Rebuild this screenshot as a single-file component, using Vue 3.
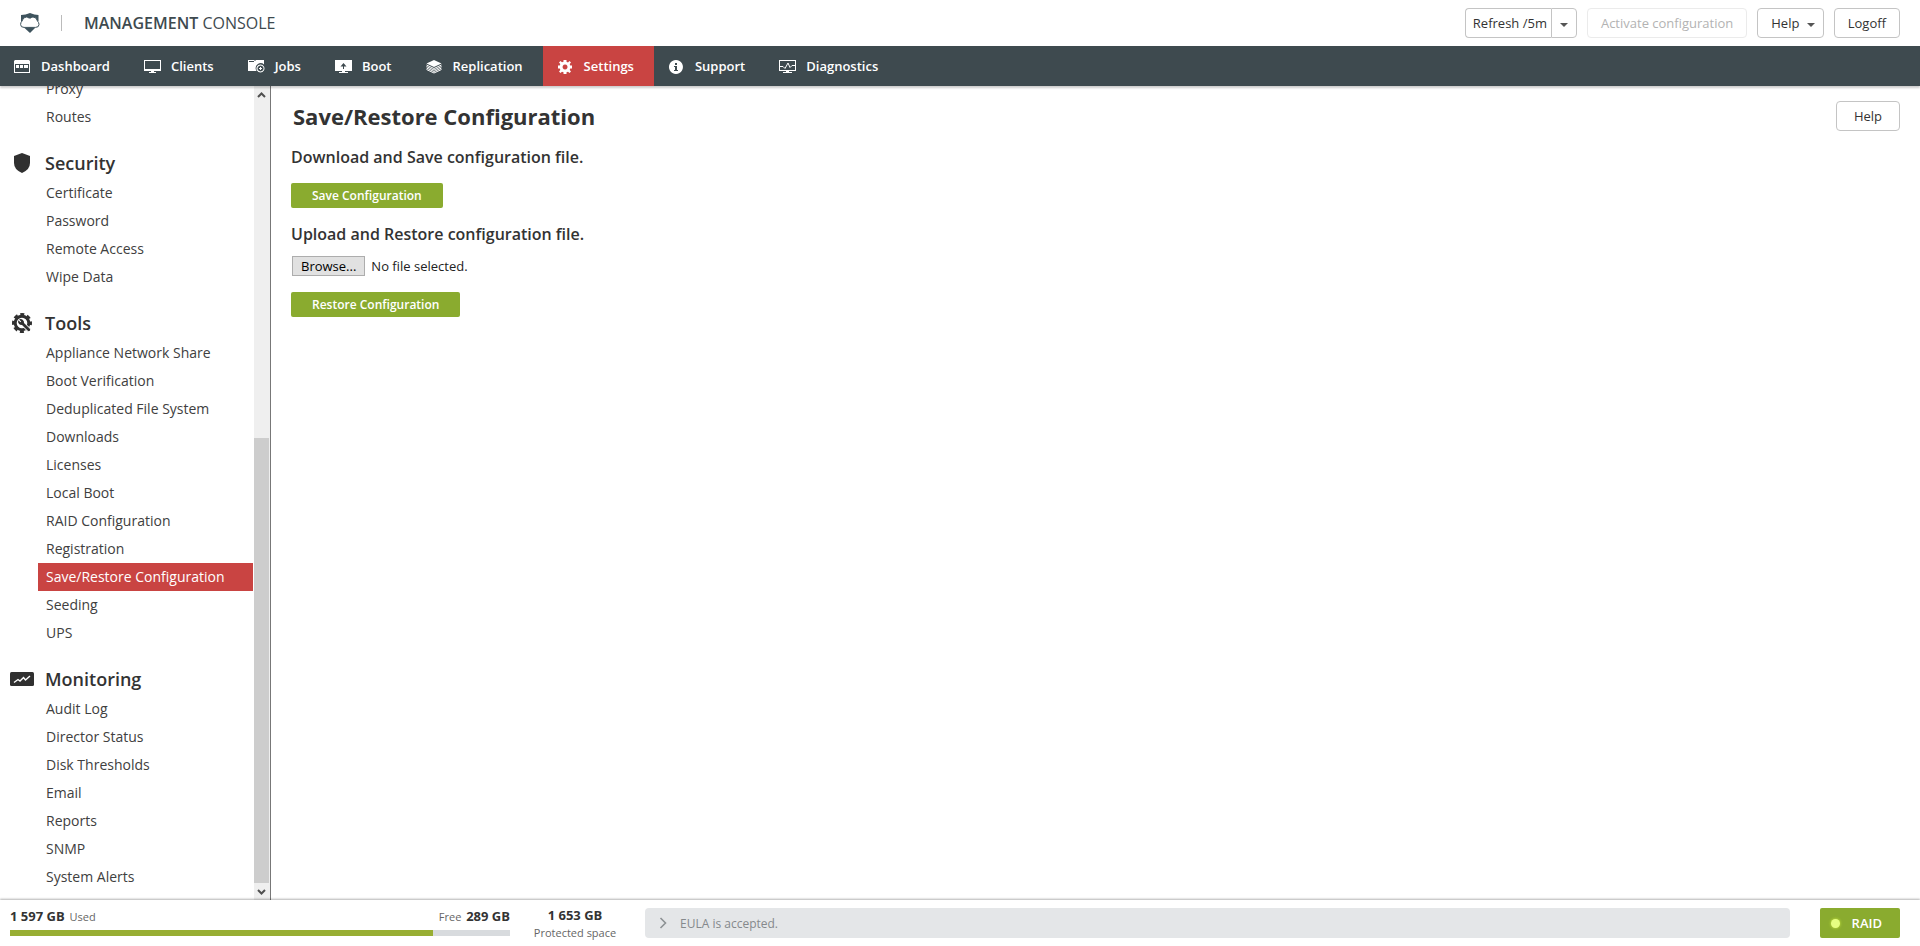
<template>
  <div class="console">
    <header class="top-bar">
      <svg class="logo" viewBox="0 0 20 20" width="20" height="20" aria-hidden="true">
        <path d="M1 2 Q5.500 2 10 0 Q14.500 2 18.500 2 V8 H1 Z" fill="#3e535d" />
        <path d="M2 8 Q3 4 6.500 4 Q8 4 8.500 5 H11 Q11.500 4 13 4 Q16.500 4 17.500 8 Q19 9.500 19 11.500 Q19 14.400 15.500 14.400 H4 Q.6 14.400 .6 11.500 Q.6 9.500 2 8 Z" fill="#fff" stroke="#3e535d" stroke-width="1" />
        <path d="M4.500 15 Q10 14 15 15 L10 20 Z" fill="#3e535d" />
      </svg>
      <span class="divider"></span>
      <h1 class="brand"><strong>MANAGEMENT</strong> CONSOLE</h1>

      <div class="top-actions">
        <div class="split">
          <button class="btn split-main">Refresh /5m</button>
          <button class="btn split-toggle" aria-label="Refresh interval"><span class="caret"></span></button>
        </div>
        <button class="btn" disabled>Activate configuration</button>
        <button class="btn btn-menu">Help <span class="caret"></span></button>
        <button class="btn">Logoff</button>
      </div>
    </header>

    <nav class="main-nav">
      <a v-for="item in navItems" :key="item.label" href="#" :class="['nav-item', { active: item.label === activeTab }]" @click.prevent="activeTab = item.label">
        <svg class="nav-icon" viewBox="0 -1 18 16" width="18" height="16" aria-hidden="true">
          <path :d="item.icon" fill="currentColor" fill-rule="evenodd" />
          <path v-if="item.lines" :d="item.lines" fill="none" :stroke="item.stroke || 'currentColor'" stroke-width="1" />
        </svg>
        <span>{{ item.label }}</span>
      </a>
    </nav>

    <div class="body">
      <aside class="sidebar">
        <div class="menu">
          <section v-for="group in groups" :key="group.title" class="group">
            <h2 v-if="group.title" class="group-title">
              <span class="group-icon">
                <svg v-if="group.icon === 'shield'" viewBox="0 0 16 20" width="16" height="20">
                  <path d="M8 0 L16 3 V10 Q16 16.500 8 20 Q0 16.500 0 10 V3 Z" fill="#303030" />
                </svg>
                <svg v-else-if="group.icon === 'tools'" viewBox="0 0 20 20" width="20" height="20">
                  <circle cx="10" cy="10" r="6.800" fill="none" stroke="#303030" stroke-width="3" />
                  <circle cx="10" cy="10" r="8.700" fill="none" stroke="#303030" stroke-width="2.600" stroke-dasharray="4 2.833" stroke-dashoffset="2" />
                  <path d="M11 11 L19 19" stroke="#fff" stroke-width="4.500" />
                  <path d="M10 10 L16.800 16.800" stroke="#303030" stroke-width="2.800" stroke-linecap="round" />
                  <path d="M7 6.500 L9.200 8.500 L8.500 9.300 L6.300 7.200 A3.400 3.400 0 0 0 10.800 11.600 L12 10 A3.400 3.400 0 0 0 7 6.500 Z" fill="#303030" />
                </svg>
                <svg v-else-if="group.icon === 'chart'" viewBox="0 0 24 14" width="24" height="14">
                  <rect width="24" height="14" rx="1.500" fill="#303030" />
                  <path d="M4 10.500 L8 7.500 L10 9 L13.500 5.500 L15.500 8 L20 4" fill="none" stroke="#fff" stroke-width="1.400" />
                </svg>
              </span>
              {{ group.title }}
            </h2>
            <ul class="links">
              <li v-for="link in group.links" :key="link">
                <a href="#" :class="{ selected: link === activePage }" @click.prevent="activePage = link">{{ link }}</a>
              </li>
            </ul>
          </section>
        </div>
        <div class="scrollbar" aria-hidden="true">
          <svg class="arrow" viewBox="0 0 15 17" width="15" height="17">
            <path d="M4 11 L7.500 7.500 L11 11" fill="none" stroke="#505050" stroke-width="2" />
          </svg>
          <div class="track">
            <div class="thumb"></div>
          </div>
          <svg class="arrow" viewBox="0 0 15 17" width="15" height="17">
            <path d="M4 7 L7.500 10.500 L11 7" fill="none" stroke="#505050" stroke-width="2" />
          </svg>
        </div>
      </aside>

      <main class="content">
        <div class="content-head">
          <h2 class="page-title">Save/Restore Configuration</h2>
          <button class="btn btn-help">Help</button>
        </div>

        <h3>Download and Save configuration file.</h3>
        <button class="btn-green">Save Configuration</button>

        <h3>Upload and Restore configuration file.</h3>
        <label class="file-field">
          <input type="file" @change="onFile" />
          <span class="browse">Browse...</span>
          <span>{{ fileName }}</span>
        </label>
        <button class="btn-green">Restore Configuration</button>
      </main>
    </div>

    <footer class="status-bar">
      <div class="storage">
        <div class="storage-text">
          <span><strong>1 597 GB</strong> Used</span>
          <span>Free <strong>289 GB</strong></span>
        </div>
        <div class="meter">
          <div class="meter-fill" :style="{ width: usedPercent + '%' }"></div>
        </div>
      </div>
      <div class="protected">
        <strong>1 653 GB</strong>
        <span>Protected space</span>
      </div>
      <div class="message">
        <svg viewBox="0 0 8 12" width="8" height="12" aria-hidden="true">
          <path d="M1.500 1 L6.500 6 L1.500 11" fill="none" stroke="#8d9294" stroke-width="1.600" />
        </svg>
        <span>EULA is accepted.</span>
      </div>
      <button class="raid"><span class="led"></span>RAID</button>
    </footer>
  </div>
</template>

<script setup>
import { ref, computed } from 'vue'

const activeTab = ref('Settings')
const activePage = ref('Save/Restore Configuration')
const fileName = ref('No file selected.')

const used = 1597
const free = 289
const usedPercent = computed(() => (used / (used + free)) * 100)

const onFile = (e) => {
  const file = e.target.files[0]
  fileName.value = file ? file.name : 'No file selected.'
}

const navItems = [
  {
    label: 'Dashboard',
    icon: 'M1 1 H15 L16 2 V14 H0 V2 Z M1 5 V13 H15 V5 Z M2 6 H5 V9 H2 Z M6 6 H9 V9 H6 Z M10 6 H14 V9 H10 Z'
  },
  {
    label: 'Clients',
    icon: 'M0 1 H17 V12 H10 V13 H12 V14 H5 V13 H7 V12 H0 Z M1 2 V10 H16 V2 Z'
  },
  {
    label: 'Jobs',
    icon: 'M0 1 H6 L7 2 L8 1 H16 V5.500 A5 5 0 0 0 8 11 L8.500 12 H0 Z M12.500 5.500 A4 4 0 1 1 12.400 5.500 Z M12.500 6.500 A3 3 0 1 0 12.600 6.500 Z M12 8 H13 V9 H14 V10 H13 V11 H12 V10 H11 V9 H12 Z',
    lines: 'M1 2.500 H6',
    stroke: '#3e4a4f'
  },
  {
    label: 'Boot',
    icon: 'M0 1 H17 V12 H10 V13 H13 V14 H4 V13 H7 V12 H0 Z M8.500 4 L5.500 7.500 H8 V10 H9 V7.500 H11.500 Z'
  },
  {
    label: 'Replication',
    icon: 'M8 1 L15.500 4.500 L8 8 L.5 4.500 Z',
    lines: 'M.5 6 L8 9.500 L15.500 6 M.5 7.500 L8 11 L15.500 7.500 M.5 9 L8 12.500 L15.500 9 M.5 10.500 L8 14 L15.500 10.500'
  },
  {
    label: 'Settings',
    icon: 'M6.500 1 H9.500 V2.800 L11 3.400 L12.500 2 L14 3.500 L12.700 5 L13.200 6.500 H15 V9.500 H13.200 L12.700 11 L14 12.500 L12.500 14 L11 12.700 L9.500 13.200 V15 H6.500 V13.200 L5 12.700 L3.500 14 L2 12.500 L3.300 11 L2.800 9.500 H1 V6.500 H2.800 L3.300 5 L2 3.500 L3.500 2 L5 3.300 L6.500 2.800 Z M8 5.500 A2.500 2.500 0 1 0 8.100 5.500 Z'
  },
  {
    label: 'Support',
    icon: 'M8 1 A7 7 0 1 1 7.900 1 Z M7 4 V6 H9 V4 Z M6 7 V8 H7 V11 H6 V12 H10 V11 H9 V7 Z'
  },
  {
    label: 'Diagnostics',
    icon: 'M0 1 H17 V12 H10 V13 H13 V14 H4 V13 H7 V12 H0 Z M1 2 V11 H16 V2 Z',
    lines: 'M1 7.500 H4 L6 9.500 L9 4 L11 8.500 L13 6.500 H16'
  }
]

const groups = [
  {
    links: ['Proxy', 'Routes']
  },
  {
    title: 'Security',
    icon: 'shield',
    links: ['Certificate', 'Password', 'Remote Access', 'Wipe Data']
  },
  {
    title: 'Tools',
    icon: 'tools',
    links: [
      'Appliance Network Share',
      'Boot Verification',
      'Deduplicated File System',
      'Downloads',
      'Licenses',
      'Local Boot',
      'RAID Configuration',
      'Registration',
      'Save/Restore Configuration',
      'Seeding',
      'UPS'
    ]
  },
  {
    title: 'Monitoring',
    icon: 'chart',
    links: ['Audit Log', 'Director Status', 'Disk Thresholds', 'Email', 'Reports', 'SNMP', 'System Alerts']
  }
]
</script>

<style>
body {
  margin: 0;
  background: #fff;
}
</style>

<style scoped>
.console {
  height: 100vh;
  display: flex;
  flex-direction: column;
  font-family: "Open Sans", "Noto Sans", sans-serif;
  font-size: 14px;
  color: #333;
}

h1,
h2,
h3,
ul {
  margin: 0;
  padding: 0;
}

button {
  font-family: inherit;
  cursor: pointer;
}

svg {
  display: block;
}

.top-bar {
  height: 46px;
  display: flex;
  align-items: center;
  padding: 0 20px;
  flex-shrink: 0;
}

.divider {
  width: 1px;
  height: 16px;
  margin: 0 22px 0 21px;
  background: #bbb;
}

.brand {
  font-size: 16px;
  font-weight: 400;
  color: #3e4a4f;
}

.brand strong {
  font-weight: 600;
}

.top-actions {
  margin-left: auto;
  display: flex;
  gap: 10px;
}

.btn {
  height: 30px;
  box-sizing: border-box;
  padding: 0 13px;
  border: 1px solid #c4c4c4;
  border-radius: 4px;
  background: #fff;
  color: #333;
  font-size: 13px;
}

.btn:disabled {
  border-color: #ebebeb;
  color: #b3b3b3;
  cursor: default;
}

.split {
  display: flex;
}

.split-main {
  padding: 0 4px 0 7px;
  border-right: none;
  border-radius: 4px 0 0 4px;
}

.split-toggle {
  padding: 0 8px;
  border-radius: 0 4px 4px 0;
}

.caret {
  display: inline-block;
  border: 4px solid transparent;
  border-top-color: #555;
  border-bottom: none;
  vertical-align: middle;
}

.btn-menu {
  padding: 0 8px 0 13px;
}

.btn-menu .caret {
  margin-left: 4px;
}

.main-nav {
  position: relative;
  z-index: 1;
  height: 40px;
  display: flex;
  flex-shrink: 0;
  background: #3e4a4f;
  box-shadow: 0 2px 2px rgba(0, 0, 0, 0.2);
}

.nav-item {
  display: flex;
  align-items: center;
  gap: 9px;
  padding: 0 20px 0 14px;
  color: #fff;
  font-size: 13px;
  font-weight: 600;
  text-decoration: none;
}

.nav-item.active {
  background: #c94442;
}

.body {
  flex: 1;
  min-height: 0;
  display: flex;
}

.sidebar {
  width: 270px;
  display: flex;
  flex-shrink: 0;
  border-right: 1px solid #777;
}

/* the menu rests at the end of its scroll range */
.menu {
  flex: 1;
  display: flex;
  flex-direction: column;
  justify-content: flex-end;
  overflow: hidden;
  padding: 0 1px 9px 0;
}

.group {
  flex-shrink: 0;
}

.group-title {
  display: flex;
  align-items: center;
  margin: 18px 0 2px;
  font-size: 18px;
  font-weight: 600;
  line-height: 28px;
}

.group-icon {
  width: 44px;
  display: flex;
  justify-content: center;
  margin-right: 1px;
}

.links {
  list-style: none;
  margin-left: 38px;
}

.links a {
  display: block;
  padding-left: 8px;
  line-height: 28px;
  color: #404040;
  text-decoration: none;
}

.links a.selected {
  background: #c94442;
  color: #fff;
}

.scrollbar {
  width: 16px;
  display: flex;
  flex-direction: column;
  background: #efefef;
}

.track {
  flex: 1;
  display: flex;
  flex-direction: column;
  justify-content: flex-end;
}

.thumb {
  width: 15px;
  height: 57%;
  background: #cdcdcd;
}

.content {
  flex: 1;
  display: flex;
  flex-direction: column;
  align-items: flex-start;
  padding: 15px 20px;
}

.content-head {
  align-self: stretch;
  display: flex;
  align-items: center;
  justify-content: space-between;
  margin-bottom: 14px;
}

.page-title {
  padding-left: 2px;
  font-size: 22px;
  font-weight: 700;
  line-height: 30px;
}

.btn-help {
  padding: 0 17px;
}

h3 {
  font-size: 16px;
  font-weight: 600;
  line-height: 24px;
  margin-bottom: 14px;
}

.btn-green {
  height: 25px;
  padding: 0 21px;
  border: none;
  border-radius: 2px;
  background: #8aab2f;
  color: #fff;
  font-size: 12px;
  font-weight: 600;
}

.btn-green + h3 {
  margin: 14px 0 10px;
}

.file-field {
  position: relative;
  display: flex;
  align-items: center;
  gap: 6px;
  margin: 0 0 16px 1px;
  font-size: 13px;
  line-height: 18px;
  color: #222;
}

.file-field input {
  position: absolute;
  inset: 0;
  width: 100%;
  opacity: 0;
}

.browse {
  padding: 0 8px;
  border: 1px solid #adadad;
  background: #e1e1e1;
  color: #000;
}

.status-bar {
  position: relative;
  height: 46px;
  display: flex;
  align-items: center;
  flex-shrink: 0;
  padding: 0 20px 0 10px;
  background: #fff;
  box-shadow: 0 -1px 2px rgba(0, 0, 0, 0.3);
  font-size: 11px;
  color: #666;
}

.status-bar strong {
  font-size: 13px;
  font-weight: 700;
  color: #333;
}

.storage {
  width: 500px;
  padding-bottom: 4px;
}

.storage-text {
  display: flex;
  justify-content: space-between;
  line-height: 18px;
  margin-bottom: 4px;
}

.storage-text strong {
  margin-right: 2px;
}

.storage-text span:last-child strong {
  margin: 0 0 0 2px;
}

.meter {
  height: 6px;
  background: #d8dbde;
}

.meter-fill {
  height: 100%;
  background: #98ae33;
}

.protected {
  display: flex;
  flex-direction: column;
  align-items: center;
  width: 130px;
  margin-right: 5px;
  padding-top: 2px;
  line-height: 17px;
}

.message {
  flex: 1;
  height: 30px;
  display: flex;
  align-items: center;
  gap: 13px;
  margin-right: 30px;
  padding-left: 14px;
  border-radius: 4px;
  background: #e4e6e8;
  color: #85898c;
  font-size: 12px;
}

.raid {
  height: 30px;
  display: flex;
  align-items: center;
  gap: 12px;
  padding: 0 18px 0 11px;
  border: none;
  border-radius: 2px;
  background: #8aab2f;
  color: #fff;
  font-size: 13px;
  font-weight: 600;
}

.led {
  width: 9px;
  height: 9px;
  border-radius: 50%;
  background: #e6ff82;
  box-shadow: 0 0 3px #d0f040;
}
</style>
